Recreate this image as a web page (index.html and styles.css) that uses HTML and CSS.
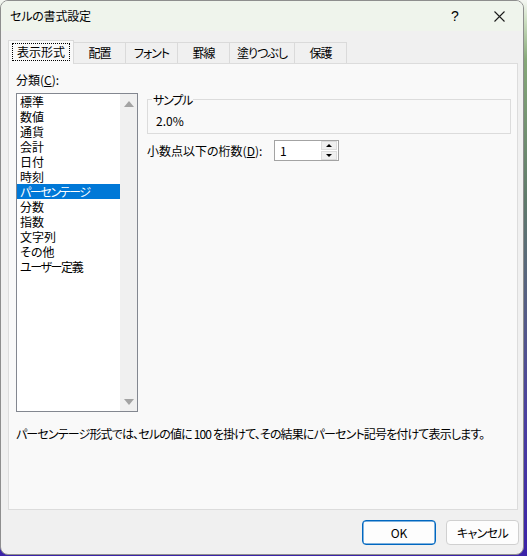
FILE: index.html
```html
<!DOCTYPE html>
<html lang="ja">
<head>
<meta charset="utf-8">
<title>セルの書式設定</title>
<link rel="stylesheet" href="styles.css">
</head>
<body>
<div class="window">
  <div class="titlebar">
    <span class="title">セルの書式設定</span>
    <span class="tbtn help">?</span>
    <span class="tbtn close"><svg width="11" height="11" viewBox="0 0 11 11"><path d="M0.5 0.5L10.5 10.5M10.5 0.5L0.5 10.5" stroke="#1b1b1b" stroke-width="1.1" fill="none"/></svg></span>
  </div>
  <div class="body">
    <div class="tabs">
      <div class="tab selected"><span class="focus">表示形式</span></div>
      <div class="tab">配置</div>
      <div class="tab">フォント</div>
      <div class="tab">罫線</div>
      <div class="tab">塗りつぶし</div>
      <div class="tab">保護</div>
    </div>
    <div class="panel">
      <div class="columns">
        <div class="left">
          <div class="label">分類(<u>C</u>):</div>
          <div class="listbox">
            <ul class="items">
              <li>標準</li>
              <li>数値</li>
              <li>通貨</li>
              <li>会計</li>
              <li>日付</li>
              <li>時刻</li>
              <li class="sel kana">パーセンテージ</li>
              <li>分数</li>
              <li>指数</li>
              <li>文字列</li>
              <li>その他</li>
              <li class="kana">ユーザー定義</li>
            </ul>
            <div class="scrollbar">
              <span class="arrow up"></span>
              <span class="arrow down"></span>
            </div>
          </div>
        </div>
        <div class="right">
          <fieldset class="sample">
            <legend>サンプル</legend>
            <div class="value">2.0%</div>
          </fieldset>
          <div class="decimals">
            <span class="dlabel">小数点以下の桁数(<u>D</u>):</span>
            <div class="spin">
              <span class="num">1</span>
              <div class="spinbtns">
                <span class="sbtn"><span class="tri tup"></span></span>
                <span class="sbtn"><span class="tri tdown"></span></span>
              </div>
            </div>
          </div>
        </div>
      </div>
      <p class="desc">パーセンテージ形式では、セルの値に 100 を掛けて、その結果にパーセント記号を付けて表示します。</p>
    </div>
    <div class="buttons">
      <button class="btn ok">OK</button>
      <button class="btn cancel">キャンセル</button>
    </div>
  </div>
</div>
</body>
</html>
```
FILE: styles.css
```css
html, body {
  margin: 0;
  padding: 0;
}
body {
  width: 527px;
  height: 556px;
  overflow: hidden;
  background: linear-gradient(#f4f6f2 0px, #cfe0c4 20px, #86a878 60px, #5f7a6a 200px, #4a3fa0 420px, #3b23a8 556px);
  font-family: "Noto Sans CJK JP", "Noto Sans", sans-serif;
  font-size: 12px;
  font-feature-settings: "palt";
  color: #000;
}
.window {
  width: 524px;
  height: 555px;
  box-sizing: border-box;
  border: 1px solid #8e8e8e;
  border-radius: 8px;
  background: #f0f0f0;
  overflow: hidden;
  display: flex;
  flex-direction: column;
}
.titlebar {
  height: 30px;
  flex: none;
  display: flex;
  align-items: center;
  background: #eff4ec;
  padding-left: 9px;
}
.title {
  flex: 1;
  line-height: 16px;
  letter-spacing: -0.2px;
}
.tbtn {
  width: 44px;
  height: 30px;
  display: flex;
  align-items: center;
  justify-content: center;
}
.help {
  font-family: "Liberation Sans", sans-serif;
  font-size: 14px;
}
.close {
  width: 45px;
  margin-right: 1px;
}
.body {
  flex: 1;
  padding: 9px 5px 0 7px;
}
.tabs {
  display: flex;
  align-items: flex-end;
  height: 23px;
  position: relative;
  z-index: 1;
}
.tab {
  box-sizing: border-box;
  min-width: 52px;
  height: 21px;
  padding: 0 7px;
  border: 1px solid #dadada;
  border-bottom: none;
  border-left: none;
  background: #f0f0f0;
  line-height: 20px;
  text-align: center;
  letter-spacing: -1px;
}
.tab.selected {
  height: 24px;
  margin-bottom: -1px;
  padding: 2px 3px 0 3px;
  border-left: 1px solid #dadada;
  background: #f9f9f9;
  line-height: 16px;
  letter-spacing: 0;
}
.focus {
  display: inline-block;
  border: 1px dotted #000;
  padding: 0 4px;
}
.panel {
  box-sizing: border-box;
  width: 510px;
  height: 447px;
  border: 1px solid #dcdcdc;
  background: #f9f9f9;
  padding: 8px 6px 0 7px;
}
.columns {
  display: flex;
  gap: 9px;
}
.left {
  width: 122px;
  flex: none;
}
.label {
  line-height: 15px;
  margin-bottom: 6px;
}
.listbox {
  box-sizing: border-box;
  height: 319px;
  border: 1px solid #838790;
  background: #fff;
  display: flex;
}
.items {
  list-style: none;
  margin: 0;
  padding: 0;
  width: 103px;
}
.items li {
  height: 15px;
  line-height: 15px;
  padding-left: 3px;
  white-space: nowrap;
}
.items li.kana {
  letter-spacing: -1.4px;
}
.items li.sel {
  background: #0078d7;
  color: #fff;
}
.scrollbar {
  width: 17px;
  background: #f0f0f0;
  display: flex;
  flex-direction: column;
  justify-content: space-between;
  align-items: center;
  padding: 7px 0 6px;
  box-sizing: border-box;
}
.arrow {
  width: 0;
  height: 0;
  border-left: 5px solid transparent;
  border-right: 5px solid transparent;
}
.arrow.up {
  border-bottom: 6px solid #a3a3a3;
}
.arrow.down {
  border-top: 6px solid #a3a3a3;
}
.right {
  flex: 1;
  padding-top: 20px;
}
.sample {
  margin: 0;
  border: 1px solid #dcdcdc;
  padding: 6px 8px 5px 8px;
}
.sample legend {
  padding: 0 1px;
  margin-left: -4px;
  line-height: 15px;
  letter-spacing: -1.2px;
}
.value {
  line-height: 15px;
}
.decimals {
  display: flex;
  align-items: center;
  margin-top: 6px;
}
.dlabel {
  line-height: 15px;
  width: 127px;
}
.spin {
  box-sizing: border-box;
  width: 65px;
  height: 21px;
  border: 1px solid #a3a3a3;
  background: #fff;
  display: flex;
  justify-content: space-between;
}
.num {
  padding-left: 5px;
  line-height: 19px;
}
.spinbtns {
  width: 16px;
  display: flex;
  flex-direction: column;
  gap: 1px;
  padding: 0 1px 0 0;
}
.sbtn {
  flex: 1;
  background: #f0f0f0;
  border: 1px solid #dcdcdc;
  display: flex;
  align-items: center;
  justify-content: center;
}
.tri {
  width: 0;
  height: 0;
  border-left: 3px solid transparent;
  border-right: 3px solid transparent;
}
.tup {
  border-bottom: 3px solid #000;
}
.tdown {
  border-top: 3px solid #000;
}
.desc {
  margin: 14px 0 0;
  line-height: 15px;
  white-space: pre;
  letter-spacing: -0.85px;
}
.buttons {
  display: flex;
  justify-content: flex-end;
  gap: 10px;
  margin-top: 10px;
  margin-right: -1px;
}
.btn {
  box-sizing: border-box;
  width: 73px;
  height: 25px;
  border: 1px solid #d0d0d0;
  border-radius: 4px;
  background: #fdfdfd;
  font-family: inherit;
  font-size: 12px;
  font-feature-settings: "palt";
  color: #000;
  padding: 0;
}
.btn.cancel {
  letter-spacing: -0.6px;
}
.btn.ok {
  width: 74px;
  border: 1px solid #0067c0;
  box-shadow: inset 0 0 0 0.5px #0067c0;
}
```
